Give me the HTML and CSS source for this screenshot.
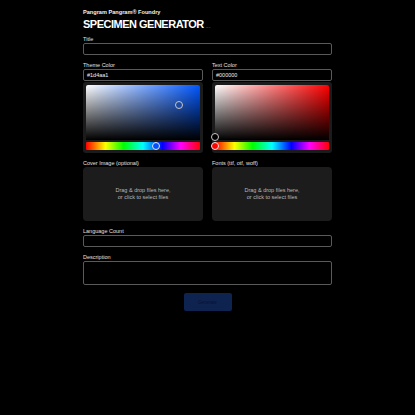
FILE: index.html
```html
<!DOCTYPE html>
<html lang="en">
<head>
<meta charset="utf-8">
<title>Specimen Generator</title>
<link rel="stylesheet" href="styles.css">
</head>
<body>
<main class="page">
  <header class="head">
    <div class="brand">Pangram Pangram® Foundry</div>
    <h1 class="title">SPECIMEN GENERATOR<span class="ver">v1.0</span></h1>
  </header>
  <form class="form">
    <div class="field">
      <label class="label">Title</label>
      <div class="input"></div>
    </div>
    <div class="row">
      <div class="field">
        <label class="label">Theme Color</label>
        <div class="input">#1d4aa1</div>
        <div class="picker">
          <div class="sat sat-blue">
            <span class="ptr" style="left:82%;top:37%;background:#1d4aa1"></span>
          </div>
          <div class="hue">
            <span class="ptr hue-ptr" style="left:61%;background:#0050ff"></span>
          </div>
        </div>
      </div>
      <div class="field">
        <label class="label">Text Color</label>
        <div class="input">#000000</div>
        <div class="picker">
          <div class="sat sat-red">
            <span class="ptr" style="left:0%;top:94%;background:#000"></span>
          </div>
          <div class="hue">
            <span class="ptr hue-ptr" style="left:0%;background:#ff0000"></span>
          </div>
        </div>
      </div>
    </div>
    <div class="row">
      <div class="field">
        <label class="label">Cover Image (optional)</label>
        <div class="drop">Drag &amp; drop files here,<br>or click to select files</div>
      </div>
      <div class="field">
        <label class="label">Fonts (ttf, otf, woff)</label>
        <div class="drop">Drag &amp; drop files here,<br>or click to select files</div>
      </div>
    </div>
    <div class="field">
      <label class="label">Language Count</label>
      <div class="input"></div>
    </div>
    <div class="field">
      <label class="label">Description</label>
      <div class="input textarea"></div>
    </div>
    <div class="actions">
      <button type="button" class="btn">Generate</button>
    </div>
  </form>
</main>
</body>
</html>
```

FILE: styles.css
```css
html, body {
  margin: 0;
  padding: 0;
  background: #000;
  color: #e8e8e8;
  font-family: "Liberation Sans", Arial, sans-serif;
}
.page {
  width: 249px;
  margin: 0 auto;
  padding-top: 9px;
}
.brand {
  font-size: 5.6px;
  line-height: 7px;
  font-weight: 700;
  color: #f2f2f2;
}
.title {
  margin: 2px 0 7px;
  font-size: 11px;
  line-height: 12px;
  font-weight: 700;
  letter-spacing: -0.5px;
  color: #fff;
}
.ver {
  font-size: 2.5px;
  line-height: 0;
  font-weight: 400;
  color: #666;
  margin-left: 2px;
  letter-spacing: 0;
}
.form {
  display: flex;
  flex-direction: column;
  gap: 8px;
}
.row {
  display: grid;
  grid-template-columns: 1fr 1fr;
  gap: 9px;
}
.field {
  display: flex;
  flex-direction: column;
}
.label {
  font-size: 5.5px;
  line-height: 5px;
  margin-bottom: 1px;
  color: #e0e0e0;
}
.input {
  box-sizing: border-box;
  height: 12px;
  border: 1px solid #5a5a5a;
  border-radius: 2px;
  background: #000;
  font-size: 5.5px;
  line-height: 10px;
  padding-left: 3px;
  color: #f0f0f0;
}
.textarea {
  height: 24px;
}
.picker {
  margin-top: 1px;
  background: #1b1b1b;
  border-radius: 3px;
  padding: 3px;
  display: flex;
  flex-direction: column;
  gap: 2px;
}
.sat {
  position: relative;
  height: 55px;
  border-radius: 2px 2px 0 0;
  background-image: linear-gradient(to top, #000, rgba(0,0,0,0)), linear-gradient(to right, #fff, rgba(255,255,255,0));
}
.sat-blue { background-color: hsl(219.5, 100%, 50%); }
.sat-red { background-color: #ff0000; }
.hue {
  position: relative;
  height: 8px;
  border-radius: 1px;
  background: linear-gradient(to right, #f00 0%, #ff0 17%, #0f0 33%, #0ff 50%, #00f 67%, #f0f 83%, #f00 100%);
}
.ptr {
  position: absolute;
  box-sizing: border-box;
  width: 8px;
  height: 8px;
  border-radius: 50%;
  border: 1px solid #c8c8c8;
  transform: translate(-50%, -50%);
}
.hue-ptr {
  top: 50%;
  border-color: #e6e6e6;
}
.drop {
  height: 54px;
  background: #1c1c1c;
  border-radius: 4px;
  display: flex;
  align-items: center;
  justify-content: center;
  text-align: center;
  font-size: 5.5px;
  line-height: 7px;
  color: #b8b8b8;
}
.actions {
  display: flex;
  justify-content: center;
}
.btn {
  width: 48px;
  height: 18px;
  border: 0;
  border-radius: 2px;
  background: #0f2350;
  color: #061230;
  font-family: "Liberation Sans", Arial, sans-serif;
  font-size: 4.5px;
  padding: 0;
}
```
